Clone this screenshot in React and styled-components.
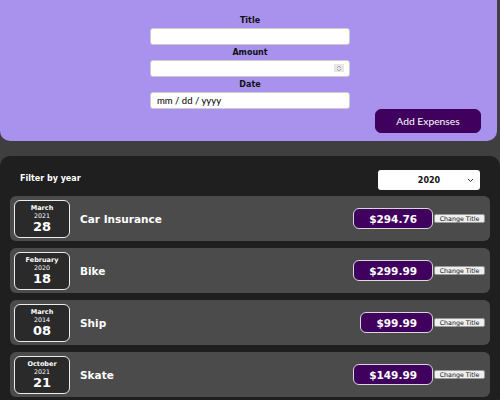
import React from 'react'
import styled, { createGlobalStyle } from "styled-components";

const GlobalStyle = createGlobalStyle`
    body{
        margin:0;
        background:#3f3f3f;
        font-family:"DejaVu Sans", sans-serif;
    }
    *{
        box-sizing:border-box;
    }
`

const expenses = [
    { id: 'e1', title: 'Car Insurance', amount: '294.76', month: 'March', year: '2021', day: '28' },
    { id: 'e2', title: 'Bike', amount: '299.99', month: 'February', year: '2020', day: '18' },
    { id: 'e3', title: 'Ship', amount: '99.99', month: 'March', year: '2014', day: '08' },
    { id: 'e4', title: 'Skate', amount: '149.99', month: 'October', year: '2021', day: '21' },
]

const ExpenseDate = ({ month, year, day }) => (
    <DateBox>
        <Month>{month}</Month>
        <Year>{year}</Year>
        <Day>{day}</Day>
    </DateBox>
)

const ExpenseItem = ({ item }) => (
    <Item>
        <ExpenseDate month={item.month} year={item.year} day={item.day} />
        <ItemTitle>{item.title}</ItemTitle>
        <Price>${item.amount}</Price>
        <SmallButton>Change Title</SmallButton>
    </Item>
)

const App = () => {
    return (
        <Page>
            <GlobalStyle />
            <NewExpense>
                <Controls>
                    <Control>
                        <Label>Title</Label>
                        <Input type="text" />
                    </Control>
                    <Control>
                        <Label>Amount</Label>
                        <InputWrap>
                            <Input type="text" />
                            <Spinner>
                                <svg width="6" height="7" viewBox="0 0 6 7">
                                    <path d="M1 3 L3 1 L5 3 M1 4 L3 6 L5 4" fill="none" stroke="#9a9a9a" strokeWidth="0.8" />
                                </svg>
                            </Spinner>
                        </InputWrap>
                    </Control>
                    <Control>
                        <Label>Date</Label>
                        <DateField>mm / dd / yyyy</DateField>
                    </Control>
                </Controls>
                <Actions>
                    <AddButton>Add Expenses</AddButton>
                </Actions>
            </NewExpense>
            <Expenses>
                <FilterRow>
                    <FilterLabel>Filter by year</FilterLabel>
                    <Select>
                        <span>2020</span>
                        <svg width="7" height="5" viewBox="0 0 7 5">
                            <path d="M1 1 L3.5 3.5 L6 1" fill="none" stroke="#333" strokeWidth="1" />
                        </svg>
                    </Select>
                </FilterRow>
                <List>
                    {expenses.map(item => <ExpenseItem key={item.id} item={item} />)}
                </List>
            </Expenses>
        </Page>
    )
}

export default App

const Page = styled.div`
    width:500px;
    height:400px;
    overflow:hidden;
`
const NewExpense = styled.div`
    background:#a892ee;
    width:500px;
    height:141px;
    padding:13px 19px 0;
    border-radius:0 0 10px 10px;
    clip-path:inset(0 3px 0 0 round 0 0 10px 0);
`
const Controls = styled.div`
    display:flex;
    flex-direction:column;
    align-items:center;
`
const Control = styled.div`
    display:flex;
    flex-direction:column;
    align-items:center;
    width:200px;
`
const Label = styled.label`
    font-size:8px;
    font-weight:bold;
    color:#111;
    line-height:15px;
    height:15px;
`
const InputWrap = styled.div`
    position:relative;
    width:100%;
`
const Input = styled.input`
    width:100%;
    height:17px;
    border:1px solid #ccc;
    border-radius:3px;
    background:#fff;
    outline:0;
    padding:0 6px;
    display:block;
`
const Spinner = styled.div`
    position:absolute;
    right:6px;
    top:4px;
    width:10px;
    height:8px;
    background:#e6e6e6;
    display:flex;
    align-items:center;
    justify-content:center;
`
const DateField = styled.div`
    width:100%;
    height:17px;
    border:1px solid #ccc;
    border-radius:3px;
    background:#fff;
    padding:0 6px;
    font-family:"Lato", sans-serif;
    font-size:9.5px;
    font-weight:500;
    color:#111;
    display:flex;
    align-items:center;
`
const Actions = styled.div`
    display:flex;
    justify-content:flex-end;
`
const AddButton = styled.button`
    width:106px;
    height:24px;
    background:#40005d;
    border:1px solid #40005d;
    border-radius:6px;
    color:#fff;
    font-family:"Lato", sans-serif;
    font-size:10.3px;
    cursor:pointer;
`
const Expenses = styled.div`
    background:#1f1f1f;
    margin-top:15px;
    padding:14px 10px 10px;
    border-radius:10px;
`
const FilterRow = styled.div`
    display:flex;
    align-items:center;
    justify-content:space-between;
    padding:0 10px;
`
const FilterLabel = styled.label`
    color:#fff;
    font-size:8px;
    font-weight:bold;
    padding-bottom:4px;
`
const Select = styled.div`
    width:102px;
    height:20px;
    background:#fff;
    border-radius:3px;
    display:flex;
    align-items:center;
    justify-content:center;
    position:relative;
    font-size:8px;
    font-weight:bold;
    color:#111;
    svg{
        position:absolute;
        right:6px;
        top:8px;
    }
`
const List = styled.div`
    display:flex;
    flex-direction:column;
    gap:7px;
    margin-top:6px;
`
const Item = styled.div`
    display:flex;
    align-items:center;
    height:45px;
    padding:3px 5px 3px 4px;
    background:#4b4b4b;
    border-radius:6px;
`
const DateBox = styled.div`
    width:56px;
    height:38px;
    display:flex;
    flex-direction:column;
    align-items:center;
    justify-content:center;
    background:#2a2a2a;
    border:1px solid #ececec;
    border-radius:6px;
    color:#fff;
`
const Month = styled.div`
    font-size:6.5px;
    font-weight:bold;
    line-height:8px;
`
const Year = styled.div`
    font-size:6.3px;
    line-height:7px;
    color:#fff;
`
const Day = styled.div`
    font-size:13px;
    font-weight:bold;
    line-height:15px;
`
const ItemTitle = styled.h2`
    flex:1;
    margin:0 0 0 10px;
    font-size:10.5px;
    color:#fff;
`
const Price = styled.div`
    height:21px;
    padding:0 15px;
    display:flex;
    align-items:center;
    background:#40005d;
    border:1px solid #d8d8d8;
    border-radius:6px;
    color:#fff;
    font-size:10.5px;
    font-weight:bold;
`
const SmallButton = styled.button`
    width:51px;
    height:9px;
    padding:0;
    margin-left:1px;
    font-family:"DejaVu Sans", sans-serif;
    font-size:6.3px;
    line-height:7px;
    color:#111;
    background:#efefef;
    border:1px solid #999;
    border-radius:2px;
`
